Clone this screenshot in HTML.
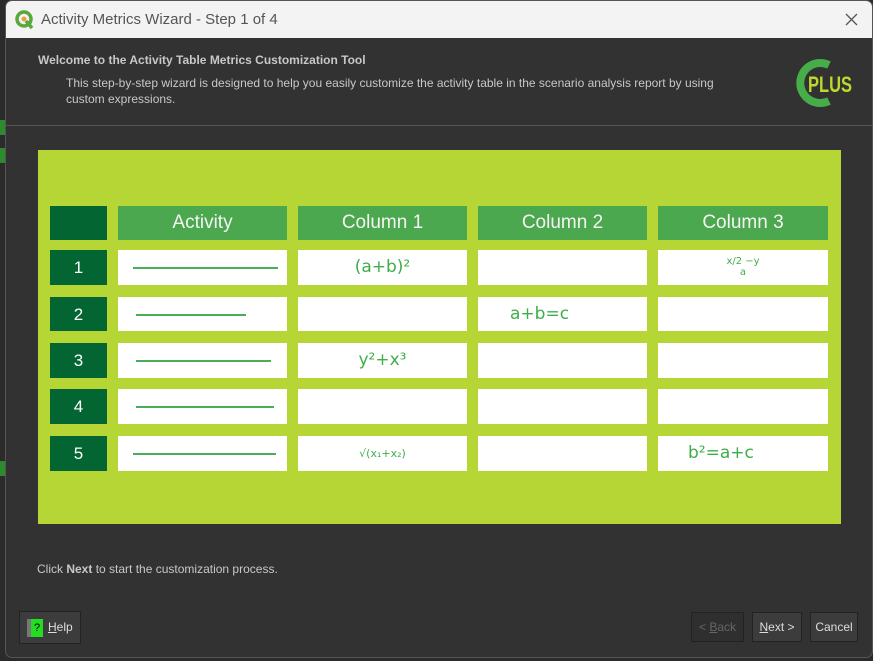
<!DOCTYPE html>
<html><head><style>
*{margin:0;padding:0;box-sizing:border-box}
body{width:873px;height:661px;background:#2b2b2b;font-family:"Liberation Sans","DejaVu Sans",sans-serif;position:relative;overflow:hidden}
.win{position:absolute;left:5px;top:0;width:868px;height:658px;background:#323232;border-radius:7px;overflow:hidden;border:1px solid #555}
.title{position:absolute;left:0;top:0;width:100%;height:37px;background:#f3f3f3}
.title span{position:absolute;left:35px;top:10px;font-size:15px;color:#555}
.abs{position:absolute}
.img{position:absolute;left:32px;top:149px;width:803px;height:374px;background:#b6d635}
.c{position:absolute;background:#fff}
.h{position:absolute;background:#4ba84e;color:#f4f4f4;font-size:19px;text-align:center;line-height:34px}
.n{position:absolute;background:#036632;color:#fff;font-size:17px;text-align:center;line-height:35px}
.hw{color:#3eae4a;font-size:17px;text-align:center;font-family:"DejaVu Sans",sans-serif}
.ln{position:absolute;height:2px;background:#4aae57;top:17px}
.btn{position:absolute;background:#3c3c3c;border:1px solid #222;color:#ddd;font-size:12px;text-align:center;line-height:29px}
</style></head><body>
<div class="abs" style="left:0;top:120px;width:5px;height:15px;background:#2c8b2c"></div>
<div class="abs" style="left:0;top:148px;width:5px;height:15px;background:#2c8b2c"></div>
<div class="abs" style="left:0;top:461px;width:5px;height:15px;background:#2c8b2c"></div>
<div class="win">
<div class="title">
<svg class="abs" style="left:9px;top:9px" width="19" height="19" viewBox="0 0 19 19"><circle cx="9" cy="9" r="7" fill="none" stroke="#5aa73b" stroke-width="3.5"/><path d="M11 11 L17 18" stroke="#5aa73b" stroke-width="3.5"/><circle cx="9" cy="9" r="2.5" fill="#e9a23b"/></svg>
<span>Activity Metrics Wizard - Step 1 of 4</span>
<svg class="abs" style="right:14px;top:12px" width="13" height="13" viewBox="0 0 13 13"><path d="M1 1L12 12M12 1L1 12" stroke="#555" stroke-width="1.3"/></svg>
</div>
<div class="abs" style="left:32px;top:52px;font-size:12px;font-weight:bold;color:#c8c8c8">Welcome to the Activity Table Metrics Customization Tool</div>
<div class="abs" style="left:60px;top:74px;width:665px;font-size:12px;line-height:16px;color:#c8c8c8">This step-by-step wizard is designed to help you easily customize the activity table in the scenario analysis report by using custom expressions.</div>
<svg class="abs" style="left:789px;top:54px" width="64" height="56" viewBox="0 0 64 56"><path d="M34 10 A20 20 0 1 0 34 46" fill="none" stroke="#46ad48" stroke-width="8"/><text x="13" y="37" font-family="Liberation Sans" font-weight="bold" font-size="22" fill="#bfd82c" textLength="44" lengthAdjust="spacingAndGlyphs">PLUS</text></svg>
<div class="abs" style="left:0;top:124px;width:100%;height:1px;background:#555"></div>
<div class="img">
<div class="n" style="left:12px;top:56px;width:57px;height:34px"></div>
<div class="h" style="left:80px;top:56px;width:169px;height:34px">Activity</div>
<div class="h" style="left:260px;top:56px;width:169px;height:34px">Column 1</div>
<div class="h" style="left:440px;top:56px;width:169px;height:34px">Column 2</div>
<div class="h" style="left:620px;top:56px;width:170px;height:34px">Column 3</div>
<div class="n" style="left:12px;top:100px;width:57px;height:35px">1</div>
<div class="n" style="left:12px;top:147px;width:57px;height:34px">2</div>
<div class="n" style="left:12px;top:193px;width:57px;height:35px">3</div>
<div class="n" style="left:12px;top:239px;width:57px;height:35px">4</div>
<div class="n" style="left:12px;top:286px;width:57px;height:35px">5</div>
<div class="c" style="left:80px;top:100px;width:169px;height:35px"><div class="ln" style="left:15px;width:145px"></div></div>
<div class="c hw" style="left:260px;top:100px;width:169px;height:35px;line-height:35px">(a+b)²</div>
<div class="c" style="left:440px;top:100px;width:169px;height:35px"></div>
<div class="c hw" style="left:620px;top:100px;width:170px;height:35px;font-size:10px;line-height:11px;padding-top:6px">x/2 −y<br>a</div>
<div class="c" style="left:80px;top:147px;width:169px;height:34px"><div class="ln" style="left:18px;width:110px"></div></div>
<div class="c" style="left:260px;top:147px;width:169px;height:34px"></div>
<div class="c hw" style="left:440px;top:147px;width:169px;height:34px;line-height:34px;text-align:left;padding-left:32px">a+b=c</div>
<div class="c" style="left:620px;top:147px;width:170px;height:34px"></div>
<div class="c" style="left:80px;top:193px;width:169px;height:35px"><div class="ln" style="left:18px;width:135px"></div></div>
<div class="c hw" style="left:260px;top:193px;width:169px;height:35px;line-height:35px">y²+x³</div>
<div class="c" style="left:440px;top:193px;width:169px;height:35px"></div>
<div class="c" style="left:620px;top:193px;width:170px;height:35px"></div>
<div class="c" style="left:80px;top:239px;width:169px;height:35px"><div class="ln" style="left:18px;width:138px"></div></div>
<div class="c" style="left:260px;top:239px;width:169px;height:35px"></div>
<div class="c" style="left:440px;top:239px;width:169px;height:35px"></div>
<div class="c" style="left:620px;top:239px;width:170px;height:35px"></div>
<div class="c" style="left:80px;top:286px;width:169px;height:35px"><div class="ln" style="left:15px;width:143px"></div></div>
<div class="c hw" style="left:260px;top:286px;width:169px;height:35px;line-height:35px;font-size:11px">√(x₁+x₂)</div>
<div class="c" style="left:440px;top:286px;width:169px;height:35px"></div>
<div class="c hw" style="left:620px;top:286px;width:170px;height:35px;line-height:35px;text-align:left;padding-left:30px">b²=a+c</div>
</div>
<div class="abs" style="left:31px;top:561px;font-size:12px;color:#c8c8c8">Click <b>Next</b> to start the customization process.</div>
<div class="btn" style="left:13px;top:610px;width:62px;height:33px;line-height:31px;text-align:left;padding-left:28px"><span style="position:absolute;left:7px;top:7px;width:4px;height:18px;background:#777"></span><span style="position:absolute;left:11px;top:7px;width:12px;height:18px;background:#22dd22;color:#000;line-height:18px;text-align:center;font-size:11px">?</span><u>H</u>elp</div>
<div class="btn" style="left:685px;top:611px;width:53px;height:30px;color:#666;background:#2f2f2f">&lt; <u>B</u>ack</div>
<div class="btn" style="left:746px;top:611px;width:50px;height:30px"><u>N</u>ext &gt;</div>
<div class="btn" style="left:804px;top:611px;width:48px;height:30px">Cancel</div>
</div>
</body></html>
